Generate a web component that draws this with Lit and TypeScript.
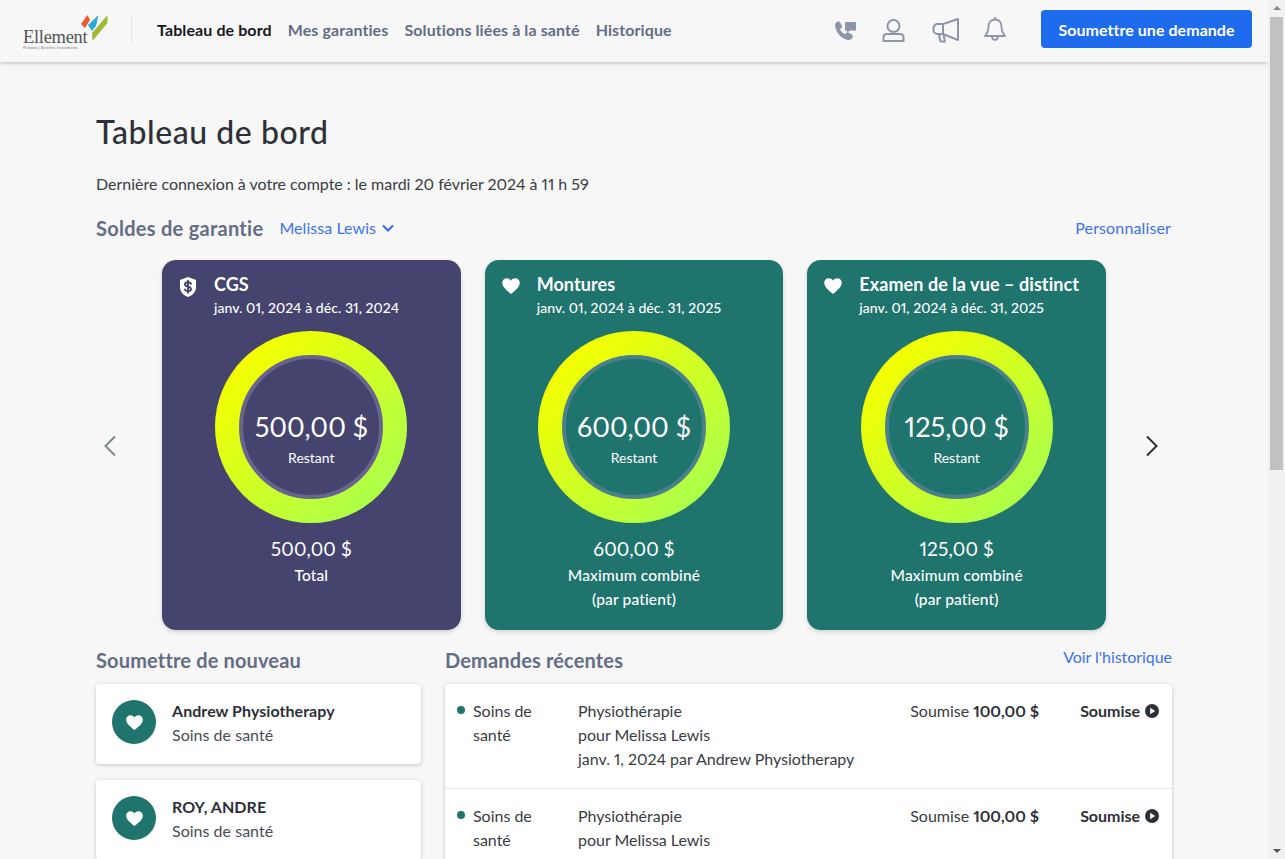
import { LitElement, html, css } from "lit";
import { customElement } from "lit/decorators.js";

const heart = (s: number) => html`<svg class="ic" width=${s} height=${s} viewBox="0 0 24 24" fill="#fff"><path d="M12 21.500C5 16 1.500 12.500 1.500 8.200 1.500 4.900 4 2.800 6.900 2.800c2 0 3.900 1 5.100 2.900 1.200-1.900 3.100-2.900 5.100-2.900 2.900 0 5.400 2.100 5.400 5.400 0 4.300-3.500 7.800-10.500 13.300z"/></svg>`;

const shield = html`<svg class="ic" width="20" height="22" viewBox="0 0 20 22"><path fill="#fff" d="M10 1l8 3v7c0 5-3.500 8.500-8 10-4.500-1.500-8-5-8-10V4z"/><path fill="none" stroke="#45446f" stroke-width="1.900" stroke-linecap="round" d="M13 7.800C12.400 6.700 11.300 6.300 10 6.300c-1.700 0-3 .8-3 2.200 0 3 6 1.500 6 4.500 0 1.400-1.300 2.200-3 2.200-1.300 0-2.500-.5-3.100-1.600M10 4.800v12"/></svg>`;

interface Card { theme: string; icon: unknown; title: string; dates: string; amount: string; lines: string[]; }
const cards: Card[] = [
  { theme: "violet", icon: shield, title: "CGS", dates: "janv. 01, 2024 à déc. 31, 2024", amount: "500,00 $", lines: ["Total"] },
  { theme: "teal", icon: heart(20), title: "Montures", dates: "janv. 01, 2024 à déc. 31, 2025", amount: "600,00 $", lines: ["Maximum combiné", "(par patient)"] },
  { theme: "teal", icon: heart(20), title: "Examen de la vue – distinct", dates: "janv. 01, 2024 à déc. 31, 2025", amount: "125,00 $", lines: ["Maximum combiné", "(par patient)"] },
];

const resubmit = ["Andrew Physiotherapy", "ROY, ANDRE"];
const claims = [
  "janv. 1, 2024 par Andrew Physiotherapy",
  "janv. 22, 2024 par Andrew Physiotherapy",
];

@customElement("app-root")
export class AppRoot extends LitElement {
  static styles = css`
    :host { display: flex; height: 859px; overflow: hidden; background: #f7f7f7; font-family: "Lato", "Open Sans", sans-serif; color: #2e3038; font-variant-numeric: proportional-nums; }
    * { box-sizing: border-box; }
    .page { flex: 1; min-width: 0; height: 859px; overflow: hidden; }
    header { height: 62px; display: flex; align-items: center; padding: 0 16px 4px 23px; background: #f7f7f7; box-shadow: 0 1px 4px rgba(0,0,0,.25); }
    .logo { width: 85px; height: 34px; position: relative; flex: none; color: #555; }
    .logo svg { position: absolute; left: 58px; top: 2px; }
    .logo .w { position: absolute; left: 0; top: 14px; font: 18.500px/22px "Liberation Serif", serif; letter-spacing: -.3px; }
    .logo .t { position: absolute; left: 0; top: 33px; font: 3.800px/5px "Lato", sans-serif; white-space: nowrap; color: #777; }
    .sep { width: 1px; height: 28px; background: #e4e4e4; margin-left: 23px; margin-right: 25px; flex: none; }
    nav { display: flex; gap: 16px; font-size: 16px; font-weight: 700; color: #646d85; letter-spacing: .1px; }
    nav .on { color: #17181c; }
    .tools { margin-left: auto; display: flex; align-items: center; color: #8d95a8; }
    .tools svg { display: block; }
    .t-phone { margin-top: 2px; }
    .t-user { margin: 2px 0 0 26px; }
    .t-mega { margin: 2px 0 0 27px; }
    .t-bell { margin: 0 0 0 23px; }
    .cta { margin-left: 34px; width: 211px; height: 38px; background: #1f6bed; color: #fff; border: 0; border-radius: 4px; font: 700 16px "Lato", sans-serif; letter-spacing: .05px; padding: 0; }
    main { padding: 51px 96px 0; }
    h1 { margin: 0; font-size: 32px; line-height: 38px; font-weight: 500; color: #2e3038; letter-spacing: .55px; }
    .last { margin: 21px 0 0; font-size: 16px; line-height: 24px; color: #3a3c44; letter-spacing: -.02px; }
    .row-h { display: flex; align-items: center; margin-top: 18px; height: 28px; }
    h2 { margin: 0; font-size: 20px; line-height: 28px; font-weight: 700; color: #646d85; letter-spacing: .15px; }
    .row-h h2 { letter-spacing: .27px; }
    .link { color: #3d72ef; font-size: 16px; line-height: 24px; letter-spacing: .06px; }
    .who { margin-left: 16px; display: flex; align-items: center; gap: 6px; }
    .push { margin-left: auto; }
    .row-h .push { letter-spacing: .13px; margin-right: 1px; }
    .carousel { display: flex; align-items: center; margin-top: 18px; }
    .arrow { width: 66px; flex: none; display: flex; padding-top: 2px; }
    .arrow.l { padding-right: 45px; justify-content: flex-end; }
    .arrow.r { padding-left: 39px; justify-content: flex-start; }
    .cards { display: grid; grid-template-columns: repeat(3, 1fr); gap: 24px; width: 944px; flex: none; }
    .card { height: 370px; border-radius: 14px; color: #fff; padding: 12px 16px 0; box-shadow: 0 2px 4px rgba(0,0,0,.15); display: flex; flex-direction: column; }
    .violet { background: #45446f; --ring: #67658f; }
    .teal { background: #1f746e; --ring: #4a7f8c; }
    .head { display: grid; grid-template-columns: 36px 1fr; align-items: start; }
    .ic { display: block; }
    .head .ic { margin: 4px 0 0 0; }
    .title { font-size: 18px; line-height: 24px; font-weight: 700; letter-spacing: .07px; white-space: nowrap; }
    .dates { font-size: 14px; line-height: 24px; font-weight: 500; letter-spacing: .06px; white-space: nowrap; }
    .donut { width: 192px; height: 192px; border-radius: 50%; margin: 11px auto 0; background: linear-gradient(135deg, #f4ff00 15%, #a8ff4e 90%); display: flex; align-items: center; justify-content: center; }
    .hole { width: 144px; height: 144px; border-radius: 50%; border: 4px solid var(--ring); display: flex; flex-direction: column; align-items: center; padding-top: 48px; }
    .violet .hole { background: #45446f; }
    .teal .hole { background: #1f746e; }
    .big { font-size: 27px; line-height: 40px; font-weight: 400; }
    .rest { font-size: 14px; line-height: 22px; }
    .amt { text-align: center; font-size: 19px; line-height: 28px; margin-top: 12px; letter-spacing: .15px; }
    .sub { text-align: center; font-size: 15.500px; line-height: 24px; font-weight: 500; letter-spacing: .15px; }
    .lower { display: grid; grid-template-columns: 325px 1fr; column-gap: 24px; margin-top: 16px; }
    .lh { display: flex; align-items: flex-start; height: 30px; }
    .lh .link { line-height: 22px; letter-spacing: -.05px; }
    .tile { height: 80px; background: #fff; border-radius: 4px; box-shadow: 0 1px 4px rgba(0,0,0,.2); display: flex; align-items: flex-start; padding: 16px 16px 0; gap: 16px; margin-top: 8px; margin-bottom: 16px; }
    .badge { width: 44px; height: 44px; border-radius: 50%; background: #1f746e; display: flex; align-items: center; justify-content: center; flex: none; }
    .txt { margin-top: -1px; }
    .name { font-size: 16px; line-height: 24px; font-weight: 700; letter-spacing: .05px; color: #2e3038; }
    .kind { font-size: 16px; line-height: 24px; color: #4a4d57; letter-spacing: .02px; }
    .panel { background: #fff; border-radius: 4px; box-shadow: 0 1px 4px rgba(0,0,0,.2); margin-top: 8px; }
    .claim { display: grid; grid-template-columns: 16px 105px 1fr auto 120px; padding: 15px 13px 17px 12px; font-size: 16px; line-height: 24px; color: #3a3c44; border-bottom: 1px solid #e6e6e6; letter-spacing: -.02px; }
    .dot { width: 8px; height: 8px; background: #1f746e; border-radius: 50%; margin-top: 7px; }
    .claim b { font-weight: 700; color: #2e3038; }
    .st { display: flex; justify-content: flex-end; align-items: center; gap: 5px; height: 24px; font-weight: 700; color: #2e3038; }
    .sb { width: 17px; height: 859px; flex: none; background: #f1f1f1; display: flex; flex-direction: column; align-items: center; position: relative; }
    .sb .thumb { width: 13px; height: 453px; background: #c1c1c1; margin-top: 17px; }
    .sb .up, .sb .dn { position: absolute; width: 0; height: 0; border-left: 4px solid transparent; border-right: 4px solid transparent; }
    .sb .up { top: 6px; border-bottom: 4px solid #888; }
    .sb .dn { bottom: 6px; border-top: 4px solid #555; }
  `;

  render() {
    return html`
      <div class="page">
        <header>
          <div class="logo">
            <svg width="28" height="30" viewBox="0 0 28 30">
              <polygon fill="#ee5a2e" points="0,10 6.500,1 9,6 4,14"/>
              <polygon fill="#2aa9d8" points="7,11 17.500,1 15,12 11,17"/>
              <polygon fill="#a3b93a" points="11,19 26.500,1 26.500,9 11.500,27"/>
            </svg>
            <span class="w">Ellement</span>
            <span class="t">Pensions | Benefits | Investments</span>
          </div>
          <div class="sep"></div>
          <nav>
            <span class="on">Tableau de bord</span>
            <span>Mes garanties</span>
            <span>Solutions liées à la santé</span>
            <span>Historique</span>
          </nav>
          <div class="tools">
            <svg class="t-phone" width="22" height="23" viewBox="0 0 21 21" fill="currentColor"><path d="M3.500 2c1.200-.5 2 0 2.500 1l1.500 3c.4.800.2 1.500-.5 2l-1.300 1c.8 2.200 2.600 4.100 4.800 5l1.200-1.200c.6-.6 1.400-.7 2.100-.3l3.200 1.800c1 .6 1.300 1.500.9 2.500-.8 2-2.300 3-4.400 2.800C7.200 18.800 1.700 12.500 1 6 .8 4.200 1.800 2.700 3.500 2z"/><path d="M10.500 2.500H21v8h-5.500l-3 2v-2h-2z"/></svg>
            <svg class="t-user" width="23" height="24" viewBox="0 0 23 24" fill="none" stroke="currentColor" stroke-width="2"><circle cx="11.500" cy="8" r="6"/><path d="M1.500 23v-3.500c0-2 1.500-3.500 3.500-3.500h13c2 0 3.500 1.500 3.500 3.500V23z"/></svg>
            <svg class="t-mega" width="28" height="26" viewBox="0 0 28 26" fill="none" stroke="currentColor" stroke-width="2" stroke-linejoin="round"><path d="M26 2v21L11 17H5.500a4 4 0 0 1-4-4V11a4 4 0 0 1 4-4H11z"/><path d="M11 7v10M7 17l1.500 7.500h4.500L11.500 17.500"/></svg>
            <svg class="t-bell" width="24" height="26" viewBox="0 0 24 26" fill="none" stroke="currentColor" stroke-width="1.800" stroke-linejoin="round"><path d="M12 3.500c-4.200 0-6.500 3-6.500 7 0 5-1.300 7-3.500 9.500h20c-2.200-2.500-3.500-4.500-3.500-9.500 0-4-2.300-7-6.500-7zM12 1v2.500M9 20.500c0 2 1.300 3.300 3 3.300s3-1.300 3-3.300"/></svg>
            <button class="cta">Soumettre une demande</button>
          </div>
        </header>
        <main>
          <h1>Tableau de bord</h1>
          <p class="last">Dernière connexion à votre compte : le mardi 20 février 2024 à 11 h 59</p>
          <div class="row-h">
            <h2>Soldes de garantie</h2>
            <span class="link who">Melissa Lewis
              <svg width="12" height="8" viewBox="0 0 12 8" fill="none" stroke="#2c6cf0" stroke-width="2"><path d="M1 1.500l5 5 5-5"/></svg>
            </span>
            <span class="link push">Personnaliser</span>
          </div>
          <div class="carousel">
            <div class="arrow l"><svg width="14" height="22" viewBox="0 0 14 22" fill="none" stroke="#7d8a8c" stroke-width="2"><path d="M12 1.500L2.500 11l9.500 9.500"/></svg></div>
            <div class="cards">
              ${cards.map((c) => html`
                <div class="card ${c.theme}">
                  <div class="head">
                    ${c.icon}
                    <div><div class="title">${c.title}</div><div class="dates">${c.dates}</div></div>
                  </div>
                  <div class="donut"><div class="hole"><div class="big">${c.amount}</div><div class="rest">Restant</div></div></div>
                  <div class="amt">${c.amount}</div>
                  ${c.lines.map((l) => html`<div class="sub">${l}</div>`)}
                </div>`)}
            </div>
            <div class="arrow r"><svg width="14" height="22" viewBox="0 0 14 22" fill="none" stroke="#2e3038" stroke-width="2"><path d="M2 1.500L11.500 11 2 20.500"/></svg></div>
          </div>
          <div class="lower">
            <section>
              <div class="lh"><h2>Soumettre de nouveau</h2></div>
              ${resubmit.map((n) => html`
                <div class="tile"><div class="badge">${heart(19)}</div><div class="txt"><div class="name">${n}</div><div class="kind">Soins de santé</div></div></div>`)}
            </section>
            <section>
              <div class="lh"><h2>Demandes récentes</h2><span class="link push">Voir l'historique</span></div>
              <div class="panel">
                ${claims.map((d) => html`
                  <div class="claim">
                    <span class="dot"></span>
                    <div>Soins de<br />santé</div>
                    <div>Physiothérapie<br />pour Melissa Lewis<br />${d}</div>
                    <div>Soumise <b>100,00 $</b></div>
                    <div class="st">Soumise
                      <svg width="14" height="14" viewBox="0 0 14 14"><circle cx="7" cy="7" r="7" fill="#2e3038"/><path d="M5.200 3.800v6.400L10.200 7z" fill="#fff"/></svg>
                    </div>
                  </div>`)}
              </div>
            </section>
          </div>
        </main>
      </div>
      <div class="sb"><span class="up"></span><div class="thumb"></div><span class="dn"></span></div>
    `;
  }
}
